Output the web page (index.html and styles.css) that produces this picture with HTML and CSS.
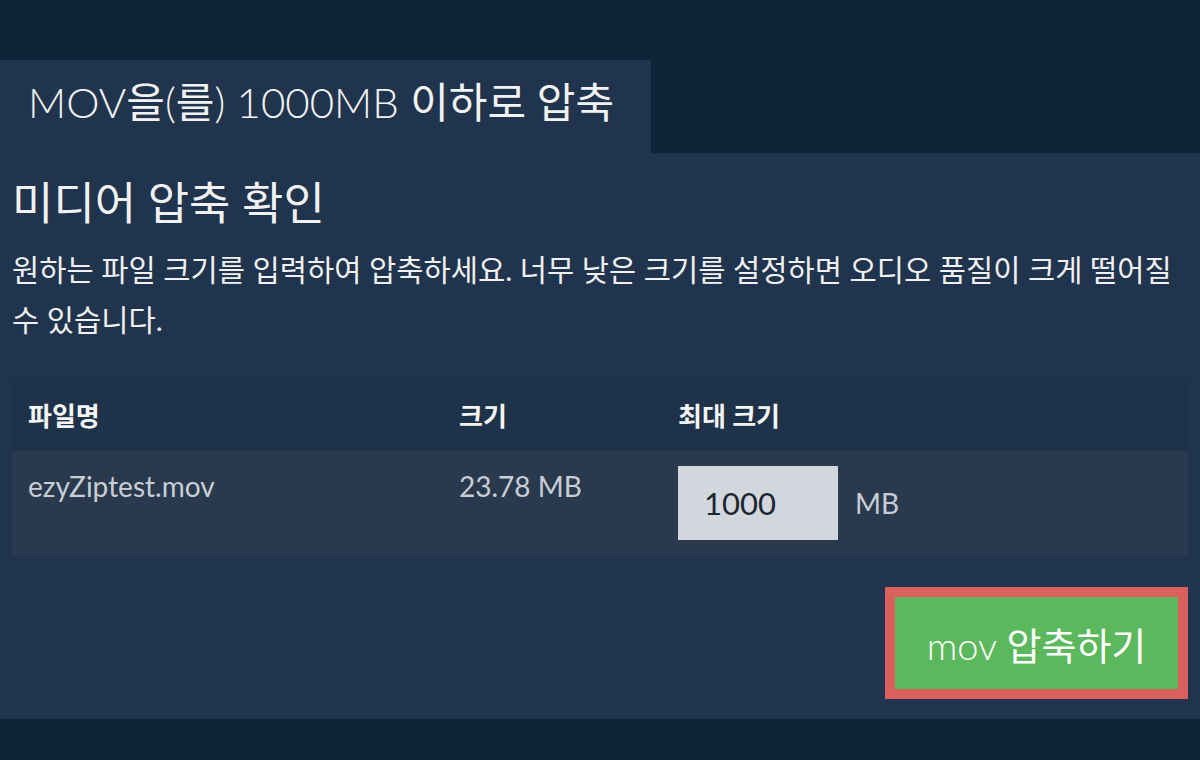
FILE: index.html
```html
<!DOCTYPE html>
<html lang="ko">
<head>
<meta charset="utf-8">
<link rel="stylesheet" href="styles.css">
</head>
<body>
<div class="page">
  <div class="tab">MOV<span class="ko">을</span>(<span class="ko">를</span>) 1000MB <span class="ko">이하로 압축</span></div>
  <section class="panel">
    <h1 class="title">미디어 압축 확인</h1>
    <p class="desc">원하는 파일 크기를 입력하여 압축하세요. 너무 낮은 크기를 설정하면 오디오 품질이 크게 떨어질 수 있습니다.</p>
    <div class="table">
      <div class="row head">
        <div class="cell c1">파일명</div>
        <div class="cell c2">크기</div>
        <div class="cell c3">최대 크기</div>
      </div>
      <div class="row body">
        <div class="cell c1">ezyZiptest.mov</div>
        <div class="cell c2">23.78 MB</div>
        <div class="cell c3 sizecell">
          <div class="input">1000</div>
          <span class="unit">MB</span>
        </div>
      </div>
    </div>
    <div class="actions">
      <button class="btn">mov <span class="ko">압축하기</span></button>
    </div>
  </section>
</div>
</body>
</html>
```

FILE: styles.css
```css
html, body {
  margin: 0;
  padding: 0;
  background: #0f2339;
  height: 100%;
}
body {
  font-family: "Lato", "Noto Sans CJK KR", sans-serif;
  color: #f1f1f1;
}
.page {
  padding-top: 60px;
}
.tab {
  width: 651px;
  height: 93px;
  box-sizing: border-box;
  background: #20354d;
  padding-left: 28px;
  font-size: 42px;
  font-weight: 300;
  line-height: 84px;
  color: #f2f2f2;
  white-space: nowrap;
}
.ko {
  font-weight: 400;
}
.panel {
  background: #20354d;
  height: 566px;
  box-sizing: border-box;
  padding: 18px 12px 20px;
  display: flex;
  flex-direction: column;
}
.title {
  margin: 0;
  font-size: 45px;
  font-weight: 400;
  line-height: 64px;
  color: #f1f1f1;
}
.desc {
  margin: 10px 0 0;
  font-size: 29.6px;
  line-height: 50px;
  color: #f1f1f1;
}
.table {
  margin-top: 32px;
  display: flex;
  flex-direction: column;
}
.row {
  display: grid;
  grid-template-columns: 431px 219px 1fr;
}
.row.head {
  background: #1e3349;
  height: 74px;
  align-items: center;
  font-weight: 700;
  font-size: 26px;
  color: #f4f4f4;
}
.row.body {
  background: #2a3a4e;
  height: 104px;
  font-size: 28px;
  color: #c9ced5;
}
.cell {
  padding-left: 16px;
}
.row.body .c1, .row.body .c2 {
  padding-top: 18px;
}
.sizecell {
  display: flex;
  align-items: center;
  gap: 17px;
  padding-top: 15px;
  align-self: start;
}
.input {
  width: 160px;
  height: 74px;
  box-sizing: border-box;
  background: #d1d7dc;
  color: #1c2530;
  font-size: 31px;
  line-height: 74px;
  padding-left: 26px;
}
.unit {
  font-size: 28px;
  color: #c9ced5;
}
.actions {
  margin-top: 32px;
  display: flex;
  justify-content: flex-end;
}
.btn {
  width: 303px;
  height: 112px;
  box-sizing: border-box;
  border: 10px solid #d9605c;
  background: #5cb85c;
  color: #ffffff;
  font-family: "Lato", "Noto Sans CJK KR", sans-serif;
  font-size: 38px;
  font-weight: 300;
  padding: 0;
  cursor: pointer;
}
```
